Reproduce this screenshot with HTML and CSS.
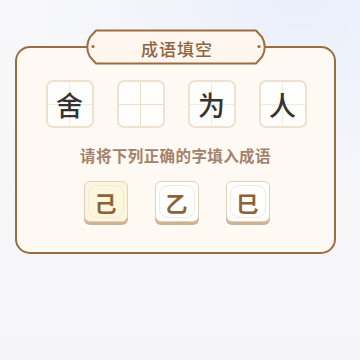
FILE: index.html
```html
<!DOCTYPE html>
<html lang="zh-CN">
<head>
    <meta charset="UTF-8">
    <meta name="viewport" content="width=device-width, initial-scale=1.0">
    <title>成语填空</title>
    <link rel="stylesheet" href="styles.css">
</head>
<body>
    <main class="card">
        <div class="tab">
            <svg class="tab-bg" width="186" height="36" viewBox="0 0 186 36">
                <path d="M13 1.5 H173 L179 8 Q184.5 18 179 28 L173 34.5 H13 L7 28 Q1.5 18 7 8 Z" fill="#fff7ef" stroke="#9b6d40" stroke-width="2"/>
                <circle cx="10" cy="17.5" r="1.6" fill="#9b6d40"/>
                <circle cx="176" cy="17.5" r="1.6" fill="#9b6d40"/>
            </svg>
            <span class="tab-title">成语填空</span>
        </div>

        <div class="words">
            <div class="word">舍</div>
            <div class="word empty"></div>
            <div class="word">为</div>
            <div class="word">人</div>
        </div>

        <p class="hint">请将下列正确的字填入成语</p>

        <div class="options">
            <button class="option picked">己</button>
            <button class="option">乙</button>
            <button class="option">巳</button>
        </div>
    </main>
</body>
</html>
```

FILE: styles.css
```css
* {
    box-sizing: border-box;
}
html, body {
    height: 100%;
}
body {
    margin: 0;
    padding-top: 45px;
    font-family: "Noto Sans CJK SC", "Noto Sans", sans-serif;
    background:
        radial-gradient(ellipse 260px 200px at 300px 0px, #e9effb 0%, rgba(233, 239, 251, 0) 100%),
        linear-gradient(180deg, #f8f8fa 0%, #f5f5f9 100%);
}

.card {
    position: relative;
    width: 321px;
    height: 208px;
    margin-left: 15px;
    margin-top: 1px;
    padding-top: 32px;
    border: 2px solid #9b6d40;
    border-radius: 15px;
    background-color: #fff9f3;
    display: flex;
    flex-direction: column;
    align-items: center;
}

/* title tab sits on the top border */
.tab {
    position: absolute;
    top: -19px;
    left: 66px;
    width: 186px;
    height: 36px;
    display: flex;
    align-items: center;
    justify-content: center;
}
.tab-bg {
    position: absolute;
    top: 0;
    left: 0;
}
.tab-title {
    position: relative;
    top: 1px;
    font-size: 17px;
    font-weight: 500;
    letter-spacing: 1px;
    color: #8e6443;
    margin-left: 2px;
}

.words {
    display: flex;
    gap: 23px;
    margin-left: 1px;
}
.word {
    position: relative;
    width: 48px;
    height: 48px;
    border: 2px solid #efe1d0;
    border-radius: 7px;
    background-color: #fffefc;
    display: flex;
    align-items: center;
    justify-content: center;
    font-size: 27px;
    font-weight: 500;
    color: #333333;
    background-image:
        linear-gradient(#f3e9de, #f3e9de),
        linear-gradient(#f3e9de, #f3e9de);
    background-size: 100% 1px, 1px 100%;
    background-position: center, center;
    background-repeat: no-repeat;
}
.word.empty {
    background-image:
        linear-gradient(#eedfcd, #eedfcd),
        linear-gradient(#eedfcd, #eedfcd);
}

.hint {
    margin: 17px 0 0;
    font-size: 15.5px;
    line-height: 20px;
    font-weight: 700;
    color: #a2826a;
    letter-spacing: 0.4px;
}

.options {
    display: flex;
    gap: 27px;
    margin-top: 16px;
    margin-left: 2px;
}
.option {
    position: relative;
    width: 44px;
    height: 41px;
    padding: 0;
    border: 1.5px solid #e3d0bb;
    border-radius: 6px;
    background-color: #ffffff;
    box-shadow: 0 3px 0 #cdb293;
    font-family: inherit;
    font-size: 22px;
    font-weight: 700;
    color: #8c6239;
    display: flex;
    align-items: center;
    justify-content: center;
}
.option::before {
    content: '';
    position: absolute;
    inset: 3px;
    border: 1px solid #f1e8de;
    border-radius: 9px;
}
.option.picked {
    background-color: #fcf6dd;
}
```
